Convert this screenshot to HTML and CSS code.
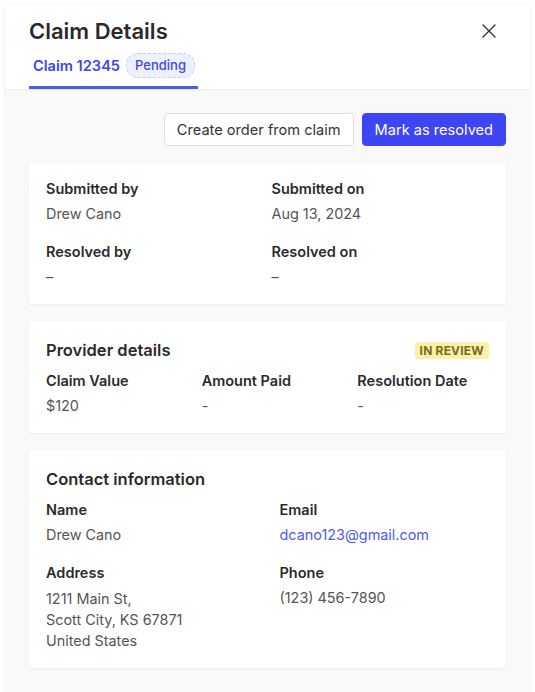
FILE: index.html
```html
<!DOCTYPE html>
<html lang="en">
<head>
    <title>Claim Details</title>
    <link rel="stylesheet" href="styles.css">
</head>
<body>

    <div class="panel">
        <div class="header">
            <div class="title-row">
                <h1>Claim Details</h1>
                <button class="close-btn" aria-label="Close">
                    <svg width="14" height="14" viewBox="0 0 14 14" fill="none" stroke="#333" stroke-width="1.4" stroke-linecap="round">
                        <path d="M1 1L13 13M13 1L1 13"/>
                    </svg>
                </button>
            </div>
            <div class="tabs">
                <div class="tab active">
                    <span>Claim 12345</span>
                    <span class="pill">Pending</span>
                </div>
            </div>
        </div>

        <div class="content">
            <div class="actions">
                <button class="btn btn-secondary">Create order from claim</button>
                <button class="btn btn-primary">Mark as resolved</button>
            </div>

            <div class="card">
                <div class="grid grid-2 tight">
                    <div class="field">
                        <div class="label">Submitted by</div>
                        <div class="value">Drew Cano</div>
                    </div>
                    <div class="field">
                        <div class="label">Submitted on</div>
                        <div class="value">Aug 13, 2024</div>
                    </div>
                    <div class="field">
                        <div class="label">Resolved by</div>
                        <div class="value">–</div>
                    </div>
                    <div class="field">
                        <div class="label">Resolved on</div>
                        <div class="value">–</div>
                    </div>
                </div>
            </div>

            <div class="card">
                <div class="card-head">
                    <h2>Provider details</h2>
                    <span class="status">IN REVIEW</span>
                </div>
                <div class="grid grid-3">
                    <div class="field">
                        <div class="label">Claim Value</div>
                        <div class="value">$120</div>
                    </div>
                    <div class="field">
                        <div class="label">Amount Paid</div>
                        <div class="value">-</div>
                    </div>
                    <div class="field">
                        <div class="label">Resolution Date</div>
                        <div class="value">-</div>
                    </div>
                </div>
            </div>

            <div class="card">
                <div class="card-head">
                    <h2>Contact information</h2>
                </div>
                <div class="grid grid-2">
                    <div class="field">
                        <div class="label">Name</div>
                        <div class="value">Drew Cano</div>
                    </div>
                    <div class="field">
                        <div class="label">Email</div>
                        <div class="value"><a href="#">dcano123@gmail.com</a></div>
                    </div>
                    <div class="field">
                        <div class="label">Address</div>
                        <div class="value address">1211 Main St,<br>Scott City, KS 67871<br>United States</div>
                    </div>
                    <div class="field">
                        <div class="label">Phone</div>
                        <div class="value">(123) 456-7890</div>
                    </div>
                </div>
            </div>
        </div>
    </div>

</body>
</html>
```

FILE: styles.css
```css
body {
    margin: 0;
    background-color: #ffffff;
    font-family: Inter, "Noto Sans", sans-serif;
    color: #2b2b2b;
}

.panel {
    margin: 5px;
    background: #f9f9f9;
    box-shadow: 0 0 4px rgba(0, 0, 0, 0.08);
    min-height: 700px;
}

.header {
    background: white;
    padding: 12px 24px 0 24px;
    border-bottom: 1px solid #ececec;
}

.title-row {
    display: flex;
    justify-content: space-between;
    align-items: center;
}

h1 {
    margin: 0;
    font-size: 22px;
    line-height: 28px;
    font-weight: 600;
    color: #2a2a2a;
}

.close-btn {
    background: none;
    border: none;
    padding: 0;
    margin-right: 10px;
    display: flex;
    cursor: pointer;
}

.tabs {
    display: flex;
}

.tab {
    display: flex;
    align-items: center;
    gap: 6px;
    height: 41px;
    padding: 0 3px 0 4px;
    font-size: 14.6px;
    font-weight: 600;
    color: #3b46f1;
}

.tab.active {
    border-bottom: 3px solid #4a5bf6;
}

.pill {
    font-size: 13px;
    font-weight: 500;
    line-height: 19px;
    padding: 2px 8px;
    border-radius: 12px;
    background: #eef0ff;
    border: 1px dashed #c7ccfb;
    color: #3b46f1;
}

.content {
    padding: 23px 24px 24px 24px;
    display: flex;
    flex-direction: column;
    gap: 17px;
}

.actions {
    display: flex;
    justify-content: flex-end;
    gap: 8px;
}

.btn {
    font-family: inherit;
    font-size: 14.6px;
    height: 33px;
    padding: 0 12px;
    border-radius: 4px;
    cursor: pointer;
}

.btn-secondary {
    background: white;
    border: 1px solid #dedede;
    color: #333;
}

.btn-primary {
    background: #3d45f5;
    border: 1px solid #3d45f5;
    color: white;
}

.card {
    background: white;
    border-radius: 4px;
    box-shadow: 0 1px 3px rgba(0, 0, 0, 0.06);
    padding: 16px 17px 17px 17px;
}

.card-head {
    display: flex;
    justify-content: space-between;
    align-items: center;
    margin: 1px 0 9px 0;
}

h2 {
    margin: 0;
    font-size: 16.5px;
    line-height: 24px;
    font-weight: 600;
    color: #2a2a2a;
}

.status {
    background: #f8f1a9;
    color: #776d1d;
    font-size: 12px;
    font-weight: 700;
    letter-spacing: 0.2px;
    padding: 1px 5px;
    border-radius: 3px;
}

.grid {
    display: grid;
    column-gap: 24px;
    row-gap: 18px;
}

.grid-2 { grid-template-columns: 1fr 1fr; }
.grid-3 { grid-template-columns: 1fr 1fr 1fr; }
.grid.tight { column-gap: 8px; }

.label {
    font-size: 14.5px;
    line-height: 20px;
    font-weight: 600;
    color: #2b2b2b;
}

.value {
    margin-top: 5px;
    font-size: 14.4px;
    line-height: 20px;
    color: #555;
}

.value.address {
    line-height: 21px;
}

.value a {
    color: #4b5cf2;
    text-decoration: none;
}
```
